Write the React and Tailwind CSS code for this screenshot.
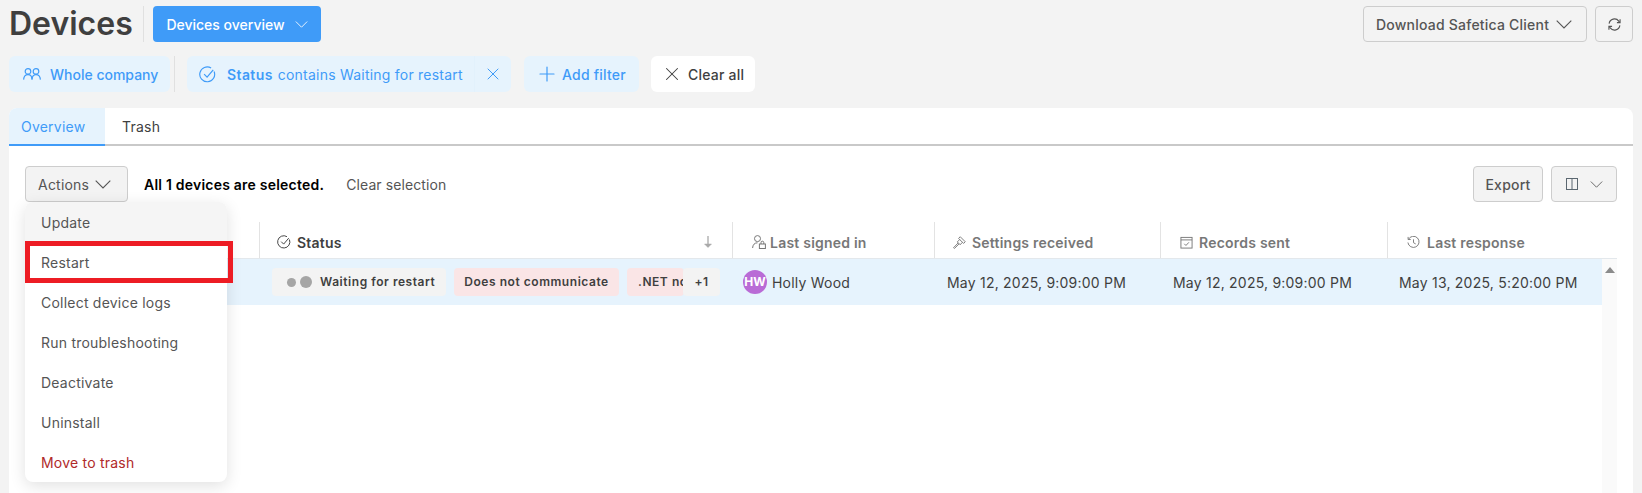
import { Plus, X } from "lucide-react";

const menuItems = ["Update", "Restart", "Collect device logs", "Run troubleshooting", "Deactivate", "Uninstall"];

function Chevron({ className = "w-[16px] h-[9px]" }) {
  return (
    <svg viewBox="0 0 16 9" fill="none" stroke="currentColor" strokeWidth="1.1" className={className}>
      <path d="M0.7 0.7L8 8L15.3 0.7" />
    </svg>
  );
}

function UsersIcon() {
  return (
    <svg viewBox="0 0 18 12" fill="none" stroke="currentColor" strokeWidth="1.2" className="w-[18px] h-[12px] shrink-0">
      <circle cx="5" cy="3.4" r="2.8" />
      <circle cx="13" cy="3.4" r="2.8" />
      <path d="M0.6 11.6C0.8 8.6 2.6 6.6 5 6.6C7.4 6.6 9 8.6 9 11.6" />
      <path d="M9 11.6C9 8.6 10.6 6.6 13 6.6C15.4 6.6 17.2 8.6 17.4 11.6" />
    </svg>
  );
}

function CheckCircle({ className }) {
  return (
    <svg viewBox="0 0 16 16" fill="none" stroke="currentColor" strokeWidth="1.1" className={className}>
      <path d="M14.2 5.2A7 7 0 1 1 11.4 1.9" />
      <path d="M4.8 7.6L7.6 10.4L13.4 3.6" />
    </svg>
  );
}

function UserLockIcon() {
  return (
    <svg viewBox="0 0 14 14" fill="none" stroke="currentColor" strokeWidth="1" className="w-[14px] h-[14px]">
      <circle cx="5.5" cy="3.6" r="3" />
      <path d="M0.6 13C0.8 9.6 2.6 7.8 5.5 7.8" />
      <rect x="7.4" y="9" width="6" height="4.5" />
      <path d="M9 9V7.6A1.4 1.4 0 0 1 11.8 7.6V9" />
    </svg>
  );
}

function GavelIcon() {
  return (
    <svg viewBox="0 0 14 14" fill="none" stroke="currentColor" strokeWidth="1" className="w-[13px] h-[13px]">
      <path d="M7.8 0.8L13.2 6.2L11.4 8L6 2.6Z" />
      <path d="M7.2 3.8L4.6 6.4L7.6 9.4L10.2 6.8" />
      <path d="M5.6 7.4L0.6 12.6L1.6 13.4L6.6 8.4" />
    </svg>
  );
}

function CalendarIcon() {
  return (
    <svg viewBox="0 0 14 14" fill="none" stroke="currentColor" strokeWidth="1" className="w-[13px] h-[13px]">
      <rect x="1" y="1.5" width="12" height="11.5" />
      <path d="M1 4.2H13" />
      <path d="M4.6 8.4L6.4 10.2L9.6 6.8" />
    </svg>
  );
}

function HistoryIcon() {
  return (
    <svg viewBox="0 0 14 14" fill="none" stroke="currentColor" strokeWidth="1" className="w-[13px] h-[13px]">
      <path d="M1.6 3.6A6 6 0 1 1 1 7" />
      <path d="M1.2 1V3.8H4" />
      <path d="M7 3.6V7.2L9.4 8.6" />
    </svg>
  );
}

function RefreshIcon() {
  return (
    <svg viewBox="0 0 14 14" fill="none" stroke="currentColor" strokeWidth="1.2" className="w-[13px] h-[13px]">
      <path d="M1.2 6A5.8 5.8 0 0 1 11.6 3.4L12.6 5" />
      <path d="M13 1.4V5H9.6" />
      <path d="M12.8 8A5.8 5.8 0 0 1 2.4 10.6L1.4 9" />
      <path d="M1 12.6V9H4.4" />
    </svg>
  );
}

function ColumnsIcon() {
  return (
    <svg viewBox="0 0 12 12" fill="none" className="w-[12px] h-[12px] shrink-0" stroke="#5b6770" strokeWidth="1">
      <rect x="0.5" y="0.5" width="11" height="11" />
      <path d="M6 0.5V11.5" />
    </svg>
  );
}

function SortArrow() {
  return (
    <svg viewBox="0 0 8 12" fill="none" stroke="#a9a9a9" strokeWidth="1.3" className="w-[8px] h-[12px] ml-auto">
      <path d="M4 0V10.5" />
      <path d="M0.5 8H7.5L4 11.5Z" fill="#a9a9a9" strokeWidth="0.5" />
    </svg>
  );
}

function HeaderCell({ className, icon, label, dark, children }) {
  return (
    <div className={`h-[36px] flex items-center pt-[4px] border-l border-[#e3e3e3] text-[14px] font-semibold shrink-0 ${dark ? "text-[#3f3f3f]" : "text-[#777777]"} ${className}`}>
      {icon}
      <span>{label}</span>
      {children}
    </div>
  );
}

function Chip({ className, children }) {
  return (
    <div className={`h-[28px] flex items-center rounded-[4px] text-[12px] font-semibold tracking-[0.55px] text-[#3f3f3f] whitespace-nowrap overflow-hidden shrink-0 ${className}`}>
      {children}
    </div>
  );
}

function Cell({ width, children }) {
  return <div className={`${width} text-[14px] text-[#3f3f3f] whitespace-nowrap shrink-0`}>{children}</div>;
}

export default function App() {
  return (
    <div className="h-[493px] overflow-hidden bg-[#f3f3f3] px-[9px] pt-[6px] font-['Inter',sans-serif] tracking-[0.22px] text-[#3f3f3f]">
      {/* page header */}
      <div className="flex items-center h-[36px]">
        <h1 className="text-[32px] font-semibold leading-none tracking-normal w-[135px] border-r border-[#e0e0e0] h-[36px] flex items-center">Devices</h1>
        <button className="ml-[9px] w-[168px] h-[36px] rounded-[4px] bg-[#3f9bf8] text-white text-[14px] font-medium tracking-normal flex items-center justify-center gap-[10px]">
          Devices overview <Chevron className="w-[13px] h-[7px]" />
        </button>
        <button className="ml-auto w-[224px] h-[36px] rounded-[4px] border border-[#cdcdcd] text-[14px] text-[#555555] font-medium flex items-center pl-[12px] gap-[7px]">
          Download Safetica Client <Chevron />
        </button>
        <button className="ml-[8px] w-[38px] h-[36px] rounded-[4px] border border-[#cdcdcd] text-[#555555] flex items-center justify-center">
          <RefreshIcon />
        </button>
      </div>

      {/* filters */}
      <div className="flex items-center h-[36px] mt-[14px] text-[14px] font-medium text-[#3f9bf8]">
        <div className="w-[161px] h-[36px] rounded-[6px] bg-[#e6f3fd] flex items-center gap-[9px] pl-[14px] tracking-normal">
          <UsersIcon /> Whole company
        </div>
        <div className="w-px h-[36px] bg-[#e0e0e0] ml-[4px]" />
        <div className="ml-[12px] w-[324px] h-[36px] rounded-[6px] bg-[#e6f3fd] flex items-center pl-[12px]">
          <CheckCircle className="w-[17px] h-[17px] shrink-0" />
          <span className="ml-[11px] font-semibold tracking-[0.4px]">Status</span>
          <span className="ml-[5px] font-normal whitespace-nowrap">contains Waiting for restart</span>
          <div className="ml-auto w-[37px] h-[36px] border-l border-[#e2f1fc] flex items-center justify-center">
            <X size={20} strokeWidth={1.2} />
          </div>
        </div>
        <div className="ml-[13px] w-[115px] h-[36px] rounded-[6px] bg-[#e6f3fd] flex items-center pl-[11px] gap-[3px]">
          <Plus size={24} strokeWidth={1.2} /> Add filter
        </div>
        <div className="ml-[12px] w-[104px] h-[36px] rounded-[6px] bg-white text-[#3f3f3f] flex items-center pl-[10px] gap-[5px]">
          <X size={22} strokeWidth={1.1} /> Clear all
        </div>
      </div>

      {/* main panel */}
      <div className="mt-[16px] w-[1624px] h-[500px] bg-white rounded-t-[8px] relative">
        <div className="flex h-[38px] border-b-2 border-[#c9c9c9] text-[14px]">
          <div className="w-[96px] bg-[#e6f3fd] text-[#3f9bf8] rounded-tl-[8px] border-b-2 border-[#3f9bf8] h-[38px] flex items-center pl-[12px]">Overview</div>
          <div className="ml-[17px] h-[36px] flex items-center text-[#3f3f3f]">Trash</div>
        </div>

        <div className="pl-[16px] pr-[16px] pt-[20px]">
          <div className="flex items-center h-[36px] text-[14px]">
            <button className="w-[103px] h-[36px] rounded-[4px] border border-[#cdcdcd] bg-[#f3f3f3] text-[#555555] flex items-center pl-[12px] gap-[6px]">
              Actions <Chevron />
            </button>
            <span className="ml-[16px] font-semibold text-black">All 1 devices are selected.</span>
            <span className="ml-[22px] text-[#555555] tracking-[0.1px]">Clear selection</span>
            <button className="ml-auto w-[70px] h-[36px] rounded-[4px] border border-[#cdcdcd] bg-[#f3f3f3] text-[#555555] font-medium">Export</button>
            <button className="ml-[8px] w-[66px] h-[36px] rounded-[4px] border border-[#cdcdcd] bg-[#f3f3f3] text-[#555555] flex items-center pl-[14px] gap-[12px]">
              <ColumnsIcon /> <Chevron className="w-[13px] h-[7px]" />
            </button>
          </div>

          {/* table */}
          <div className="mt-[20px]">
            <div className="flex border-b border-[#e3e8ec] h-[37px]">
              <div className="w-[234px] shrink-0" />
              <HeaderCell className="w-[473px] pl-[17px] pr-[20px] gap-[6px]" dark icon={<CheckCircle className="w-[14px] h-[14px]" />} label="Status">
                <SortArrow />
              </HeaderCell>
              <HeaderCell className="w-[202px] pl-[19px] gap-[4px]" icon={<UserLockIcon />} label="Last signed in" />
              <HeaderCell className="w-[226px] pl-[18px] gap-[6px]" icon={<GavelIcon />} label="Settings received" />
              <HeaderCell className="w-[227px] pl-[19px] gap-[6px]" icon={<CalendarIcon />} label="Records sent" />
              <HeaderCell className="w-[230px] pl-[19px] gap-[7px]" icon={<HistoryIcon />} label="Last response" />
            </div>
            <div className="flex">
              <div className="w-[1577px] h-[46px] bg-[#e6f3fd] flex items-center shrink-0">
                <div className="w-[247px] shrink-0" />
                <div className="w-[473px] shrink-0 flex items-center gap-[8px] relative">
                  <Chip className="w-[174px] bg-[#f3f3f3] pl-[15px]">
                    <span className="w-[9px] h-[9px] rounded-full bg-[#a5a5a5] shrink-0" />
                    <span className="ml-[4px] w-[12px] h-[12px] rounded-full bg-[#a5a5a5] shrink-0" />
                    <span className="ml-[8px]">Waiting for restart</span>
                  </Chip>
                  <Chip className="w-[165px] bg-[#fae5e6] justify-center">Does not communicate</Chip>
                  <Chip className="w-[57px] bg-[#fae5e6] pl-[11px]">.NET not installed</Chip>
                  <Chip className="absolute left-[411px] w-[37px] bg-[#f3f3f3] justify-center">+1</Chip>
                </div>
                <div className="w-[202px] shrink-0 flex items-center text-[14px] text-[#3f3f3f]">
                  <div className="-ml-[2px] w-[24px] h-[24px] rounded-full bg-[#b96bd6] text-white text-[12px] font-bold tracking-normal flex items-center justify-center">HW</div>
                  <span className="ml-[5px]">Holly Wood</span>
                </div>
                <Cell width="w-[226px]">May 12, 2025, 9:09:00 PM</Cell>
                <Cell width="w-[226px]">May 12, 2025, 9:09:00 PM</Cell>
                <Cell width="w-[200px]">May 13, 2025, 5:20:00 PM</Cell>
              </div>
              <div className="w-[15px] h-[300px] bg-[#fafafa] pt-[8px] flex justify-center shrink-0">
                <div className="w-0 h-0 border-l-[5px] border-r-[5px] border-b-[6px] border-l-transparent border-r-transparent border-b-[#8b8b8b]" />
              </div>
            </div>
          </div>
        </div>

        {/* actions dropdown */}
        <div className="absolute left-[16px] top-[94px] w-[202px] h-[280px] bg-white rounded-[8px] shadow-[0_4px_16px_rgba(0,0,0,0.12)] text-[14px] text-[#555555]">
          {menuItems.map((item, i) => (
            <div key={item} className={`h-[40px] flex items-center pl-[16px] ${i === 0 ? "bg-[#f5f5f5] rounded-t-[8px]" : ""}`}>
              {item}
            </div>
          ))}
          <div className="h-[40px] flex items-center pl-[16px] text-[#b02a2a]">Move to trash</div>
        </div>

        {/* red highlight around Restart */}
        <div className="absolute left-[16px] top-[133px] w-[208px] h-[42px] border-[5px] border-[#ed1c24]" />
      </div>
    </div>
  );
}
